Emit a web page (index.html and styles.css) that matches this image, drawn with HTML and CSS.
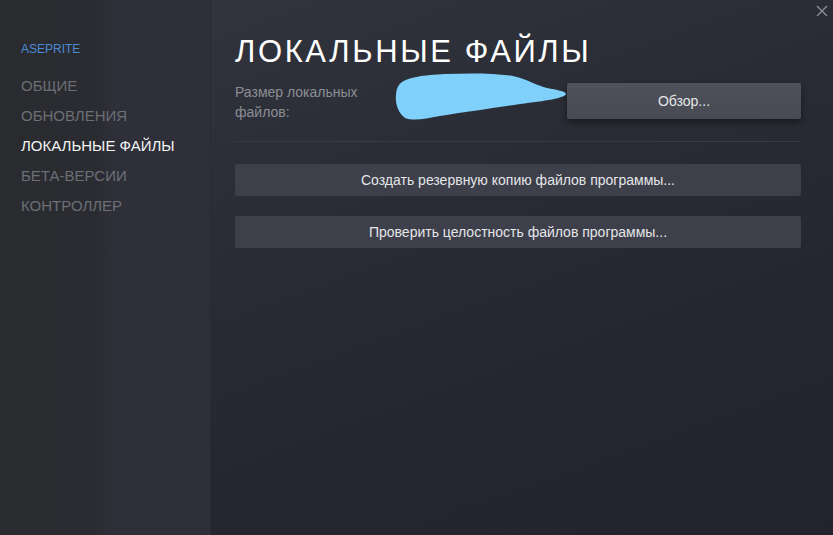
FILE: index.html
```html
<!DOCTYPE html>
<html>

<head>
    <title>Локальные файлы</title>
    <link rel="stylesheet" href="styles.css">
</head>

<body>

    <div class="window">

        <!-- Left menu -->
        <aside class="sidebar">
            <div class="app-name">ASEPRITE</div>
            <nav class="menu">
                <div class="menu-item">ОБЩИЕ</div>
                <div class="menu-item">ОБНОВЛЕНИЯ</div>
                <div class="menu-item active">ЛОКАЛЬНЫЕ ФАЙЛЫ</div>
                <div class="menu-item">БЕТА-ВЕРСИИ</div>
                <div class="menu-item">КОНТРОЛЛЕР</div>
            </nav>
        </aside>

        <!-- Page -->
        <main class="content">
            <h1 class="page-title">ЛОКАЛЬНЫЕ ФАЙЛЫ</h1>

            <div class="size-row">
                <div class="size-label">Размер локальных файлов:</div>
                <div class="size-value">
                    <svg class="scribble" width="172" height="50" viewBox="0 0 172 50">
                        <path d="M4 12 C10 4 30 2 50 1 C75 0 100 0 118 3 C132 6 140 12 152 15 C162 17 170 18 171 21 C170 25 150 28 125 31 C100 35 70 39 45 43 C30 46 18 48 10 45 C3 40 0 30 1 22 C1 18 2 15 4 12 Z" fill="#7fd0fb"/>
                    </svg>
                </div>
                <button class="btn btn-browse">Обзор...</button>
            </div>

            <div class="divider"></div>

            <button class="btn btn-wide">Создать резервную копию файлов программы...</button>
            <button class="btn btn-wide">Проверить целостность файлов программы...</button>
        </main>

        <svg class="close" width="12" height="12" viewBox="0 0 12 12">
            <path d="M1 1 L11 11 M11 1 L1 11" stroke="#8d9098" stroke-width="1.3"/>
        </svg>
    </div>

</body>

</html>
```

FILE: styles.css
```css
body {
    margin: 0;
    background-color: #24252e;
    font-family: "Liberation Sans", Arial, sans-serif;
}

.window {
    position: relative;
    display: flex;
    width: 833px;
    height: 535px;
    overflow: hidden;
}

.sidebar {
    width: 189px;
    flex-shrink: 0;
    padding: 41px 0 0 21px;
    background: linear-gradient(to right, #2a2b2f 0%, #2b2c31 45%, #2e2f39 55%, #2e2f39 100%);
    border-right: 1px solid #2a2b30;
}

.app-name {
    color: #4a8ad4;
    font-size: 12px;
    line-height: 16px;
    margin-bottom: 14px;
}

.menu-item {
    color: #6c6f76;
    font-size: 15px;
    line-height: 30px;
}

.menu-item.active {
    color: #f2f3f4;
}

.content {
    flex: 1;
    padding: 37px 32px 0 24px;
    background: linear-gradient(160deg, #31343d 0%, #2a2c35 35%, #25262f 65%, #22232c 100%);
}

.page-title {
    margin: 0 0 15px 0;
    color: #ffffff;
    font-size: 31px;
    font-weight: normal;
    line-height: 30px;
    letter-spacing: 2.6px;
}

.size-row {
    display: flex;
    align-items: flex-start;
}

.size-label {
    width: 130px;
    color: #8b8e95;
    font-size: 14px;
    line-height: 20px;
}

.size-value {
    flex: 1;
    position: relative;
    height: 38px;
}

.scribble {
    position: absolute;
    left: 30px;
    top: -9px;
}

.btn {
    display: block;
    border: none;
    border-radius: 2px;
    font-family: "Liberation Sans", Arial, sans-serif;
    font-size: 14px;
    color: #e4e6e8;
}

.btn-browse {
    width: 234px;
    height: 36px;
    margin-top: 1px;
    background: linear-gradient(to bottom, #4f525b, #474a53);
    box-shadow: 0 3px 6px rgba(0, 0, 0, 0.45);
}

.divider {
    height: 1px;
    margin: 19px 0 22px 0;
    background-color: #383a43;
}

.btn-wide {
    width: 100%;
    height: 32px;
    margin-bottom: 20px;
    background-color: #3d3f4a;
}

.close {
    position: absolute;
    top: 5px;
    right: 5px;
}
```
